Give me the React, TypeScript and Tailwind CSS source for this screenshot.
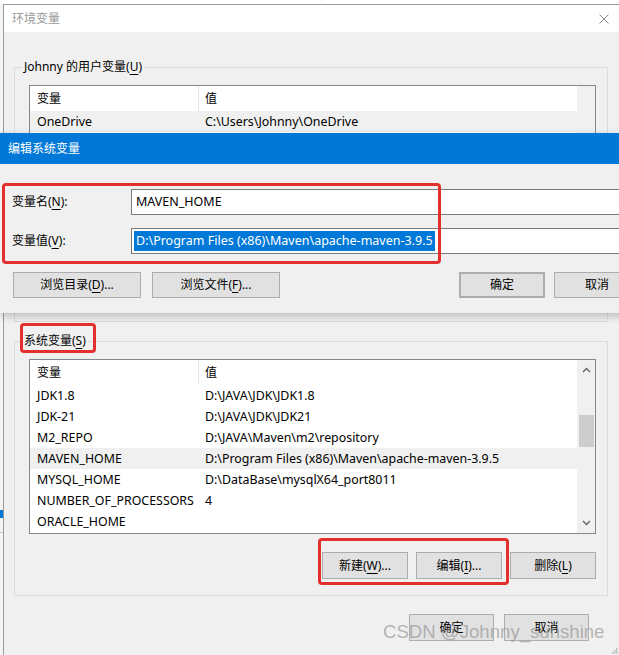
import React from "react";

interface Row {
  name: string;
  value: string;
  selected?: boolean;
}

const userRows: Row[] = [
  { name: "OneDrive", value: "C:\\Users\\Johnny\\OneDrive", selected: true },
  { name: "Path", value: "C:\\Users\\Johnny\\AppData\\Local\\Microsoft\\WindowsApps;" },
  { name: "TEMP", value: "C:\\Users\\Johnny\\AppData\\Local\\Temp" },
  { name: "TMP", value: "C:\\Users\\Johnny\\AppData\\Local\\Temp" },
];

const systemRows: Row[] = [
  { name: "JDK1.8", value: "D:\\JAVA\\JDK\\JDK1.8" },
  { name: "JDK-21", value: "D:\\JAVA\\JDK\\JDK21" },
  { name: "M2_REPO", value: "D:\\JAVA\\Maven\\m2\\repository" },
  { name: "MAVEN_HOME", value: "D:\\Program Files (x86)\\Maven\\apache-maven-3.9.5", selected: true },
  { name: "MYSQL_HOME", value: "D:\\DataBase\\mysqlX64_port8011" },
  { name: "NUMBER_OF_PROCESSORS", value: "4" },
  { name: "ORACLE_HOME", value: "" },
];

const Chevron = ({ up }: { up?: boolean }) => (
  <svg width="9" height="6" viewBox="0 0 9 6" className="block">
    <path
      d={up ? "M1 5 L4.5 1.5 L8 5" : "M1 1 L4.5 4.5 L8 1"}
      fill="none"
      stroke="#606060"
      strokeWidth="1.3"
    />
  </svg>
);

const Btn = ({ children, className = "" }: { children: React.ReactNode; className?: string }) => (
  <div
    className={`flex items-center justify-center bg-[#e1e1e1] border border-[#adadad] text-[12px] text-black ${className}`}
  >
    {children}
  </div>
);

const U = ({ c }: { c: string }) => (
  <span className="underline decoration-1 underline-offset-[3px]">{c}</span>
);

const ListBox = ({ rows, arrows }: { rows: Row[]; arrows?: boolean }) => (
  <div className="flex h-[175px] w-[567px] border border-[#828790] bg-white overflow-hidden text-[12.4px]">
    <div className="flex-1 flex flex-col">
      <div className="flex h-[25px] shrink-0 items-center text-[12px]">
        <div className="w-[169px] h-full flex items-center pl-[7px] border-r border-[#e5e5e5]">变量</div>
        <div className="pl-[6px]">值</div>
      </div>
      {rows.map((r) => (
        <div
          key={r.name}
          className={`flex h-[21px] shrink-0 items-center pt-px ${r.selected ? "bg-[#f0f0f0]" : ""}`}
        >
          <div className="w-[169px] pl-[7px] whitespace-nowrap">{r.name}</div>
          <div className="pl-[6px] whitespace-nowrap">{r.value}</div>
        </div>
      ))}
    </div>
    <div className="w-[18px] bg-[#f0f0f0] flex flex-col items-center">
      {arrows && (
        <>
          <div className="h-[20px] flex items-center justify-center">
            <Chevron up />
          </div>
          <div className="mt-[35px] w-[15px] h-[32px] bg-[#cdcdcd]" />
          <div className="mt-auto h-[20px] flex items-center justify-center">
            <Chevron />
          </div>
        </>
      )}
    </div>
  </div>
);

export default function App() {
  return (
    <div className="relative w-[619px] h-[655px] overflow-hidden bg-[#f4f4f4] font-['Noto_Sans','Noto_Sans_CJK_SC',sans-serif] text-[12px] text-black">
      {/* window behind, only edges visible */}
      <div className="absolute top-0 left-0 right-0 h-[4px] overflow-hidden bg-white">
        <div className="flex gap-[38px] pl-[10px] -mt-[14px] text-[12px] text-[#8a8a8a] whitespace-nowrap">
          <span>名称修改</span>
          <span>修改日期</span>
          <span>类型</span>
          <span>大小</span>
          <span>属性</span>
          <span>创建时间</span>
          <span>所有者</span>
          <span>标记</span>
          <span>分级</span>
        </div>
      </div>
      <div className="absolute left-0 top-[510px] w-[3px] h-[8px] bg-[#0078d7]" />
      <div className="absolute left-0 top-[532px] w-[3px] h-px bg-[#c8c8c8]" />

      {/* 环境变量 window */}
      <div className="absolute left-[3px] top-[4px] w-[616px] h-[660px] border-l border-t border-[#9a9a9a] bg-[#f0f0f0] flex flex-col">
        <div className="h-[27px] shrink-0 bg-white flex items-center justify-between pl-[8px] pr-[10px]">
          <span className="text-[#9a9a9a]">环境变量</span>
          <svg width="10" height="10" viewBox="0 0 10 10">
            <path d="M0.5 0.5 L9.5 9.5 M9.5 0.5 L0.5 9.5" stroke="#8a8a8a" strokeWidth="1" />
          </svg>
        </div>

        <fieldset className="ml-[10px] mt-[27px] w-[594px] border border-[#dcdcdc] pl-[14px] pr-[11px] pt-[10px] pb-[16px]">
          <legend className="-ml-[7px] px-[2px] leading-[16px]">
            Johnny 的用户变量(<U c="U" />)
          </legend>
          <ListBox rows={userRows} />
          <div className="mt-[18px] flex justify-end gap-[8px]">
            <Btn className="w-[86px] h-[27px]">新建(N)...</Btn>
            <Btn className="w-[86px] h-[27px]">编辑(E)...</Btn>
            <Btn className="w-[86px] h-[27px]">删除(D)</Btn>
          </div>
        </fieldset>

        <fieldset className="ml-[10px] mt-[11px] w-[594px] border border-[#dcdcdc] pl-[14px] pr-[11px] pt-[10px] pb-[16px]">
          <legend className="-ml-[7px] px-[2px] leading-[16px]">
            系统变量(<U c="S" />)
          </legend>
          <ListBox rows={systemRows} arrows />
          <div className="mt-[18px] flex justify-end gap-[8px]">
            <Btn className="w-[86px] h-[27px]">
              新建(<U c="W" />)...
            </Btn>
            <Btn className="w-[86px] h-[27px]">
              编辑(<U c="I" />)...
            </Btn>
            <Btn className="w-[86px] h-[27px]">
              删除(<U c="L" />)
            </Btn>
          </div>
        </fieldset>

        <div className="mt-[18px] flex justify-end gap-[10px] pr-[30px]">
          <Btn className="w-[85px] h-[27px]">确定</Btn>
          <Btn className="w-[85px] h-[27px]">取消</Btn>
        </div>
      </div>

      {/* 编辑系统变量 dialog */}
      <div className="absolute left-0 top-[133px] w-[652px] bg-[#f0f0f0] shadow-[0_3px_8px_rgba(0,0,0,0.22)] flex flex-col">
        <div className="h-[31px] bg-[#0078d7] text-white flex items-center pl-[8px]">编辑系统变量</div>
        <div className="flex flex-col pl-[12px] pr-[12px] pt-[25px] pb-[15px]">
          <div className="flex items-center h-[26px]">
            <div className="w-[119px]">
              变量名(<U c="N" />):
            </div>
            <div className="flex-1 h-full bg-white border border-[#7a7a7a] flex items-center pl-[4px] text-[12.5px]">
              MAVEN_HOME
            </div>
          </div>
          <div className="flex items-center h-[26px] mt-[13px]">
            <div className="w-[119px]">
              变量值(<U c="V" />):
            </div>
            <div className="flex-1 h-full bg-white border border-[#7a7a7a] flex items-center pl-[2px] text-[12.5px]">
              <span className="bg-[#0078d7] text-white px-[2px] leading-[20px] whitespace-nowrap">
                D:\Program Files (x86)\Maven\apache-maven-3.9.5
              </span>
            </div>
          </div>
          <div className="flex mt-[18px] h-[26px]">
            <Btn className="w-[128px] h-full ml-[1px]">
              浏览目录(<U c="D" />)...
            </Btn>
            <Btn className="w-[128px] h-full ml-[11px]">
              浏览文件(<U c="F" />)...
            </Btn>
            <Btn className="w-[86px] h-full ml-auto border-2 border-[#0078d7]">确定</Btn>
            <Btn className="w-[86px] h-full ml-[9px]">取消</Btn>
          </div>
        </div>
      </div>

      {/* red annotation boxes */}
      <div className="absolute left-[2px] top-[183px] w-[439px] h-[81px] border-[3px] border-[#e3302e] rounded-[4px]" />
      <div className="absolute left-[20px] top-[323px] w-[76px] h-[30px] border-[3px] border-[#e3302e] rounded-[4px]" />
      <div className="absolute left-[318px] top-[538px] w-[191px] h-[47px] border-[3px] border-[#e3302e] rounded-[4px]" />

      {/* watermark */}
      <div className="absolute left-[383px] top-[621px] font-['Liberation_Sans',Arial,sans-serif] text-[18.6px] leading-[22px] text-[#8a8a8a]/60 whitespace-nowrap">
        CSDN @Johnny_sunshine
      </div>

      {/* resize grip */}
      <svg className="absolute right-[1px] bottom-[1px]" width="6" height="6" viewBox="0 0 6 6">
        <rect x="4" y="0" width="1.5" height="1.5" fill="#b5b5b5" />
        <rect x="2" y="2" width="1.5" height="1.5" fill="#b5b5b5" />
        <rect x="4" y="2" width="1.5" height="1.5" fill="#b5b5b5" />
        <rect x="0" y="4" width="1.5" height="1.5" fill="#b5b5b5" />
        <rect x="2" y="4" width="1.5" height="1.5" fill="#b5b5b5" />
        <rect x="4" y="4" width="1.5" height="1.5" fill="#b5b5b5" />
      </svg>
    </div>
  );
}
